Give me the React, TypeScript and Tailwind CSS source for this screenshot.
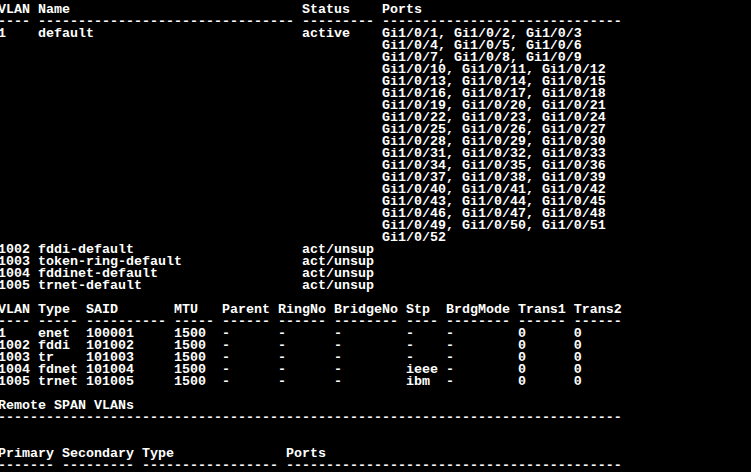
const dash = (n: number) => "-".repeat(n);
const pad = (s: string, n: number) => s.padEnd(n, " ");

const ports: string[] = [];
for (let i = 1; i <= 52; i += 3) {
  const group = [i, i + 1, i + 2].filter((p) => p <= 52).map((p) => `Gi1/0/${p}`);
  ports.push(group.join(", "));
}

const vlanRows = [
  ["1002", "fddi-default"],
  ["1003", "token-ring-default"],
  ["1004", "fddinet-default"],
  ["1005", "trnet-default"],
];

const typeRows = [
  ["1", "enet", "100001", "-"],
  ["1002", "fddi", "101002", "-"],
  ["1003", "tr", "101003", "-"],
  ["1004", "fdnet", "101004", "ieee"],
  ["1005", "trnet", "101005", "ibm"],
];

function buildLines() {
  const lines: string[] = [];
  lines.push(pad("VLAN", 5) + pad("Name", 33) + pad("Status", 10) + "Ports");
  lines.push([dash(4), dash(32), dash(9), dash(30)].join(" "));
  ports.forEach((p, i) => {
    if (i === 0) lines.push(pad("1", 5) + pad("default", 33) + pad("active", 10) + p);
    else lines.push(" ".repeat(48) + p);
  });
  vlanRows.forEach(([id, name]) => lines.push(pad(id, 5) + pad(name, 33) + "act/unsup"));
  lines.push("");
  lines.push("VLAN Type  SAID       MTU   Parent RingNo BridgeNo Stp  BrdgMode Trans1 Trans2");
  lines.push([dash(4), dash(5), dash(10), dash(5), dash(6), dash(6), dash(8), dash(4), dash(8), dash(6), dash(6)].join(" "));
  typeRows.forEach(([id, type, said, stp]) =>
    lines.push(
      pad(id, 5) + pad(type, 6) + pad(said, 11) + pad("1500", 6) + pad("-", 7) + pad("-", 7) + pad("-", 9) + pad(stp, 5) + pad("-", 9) + pad("0", 7) + "0"
    )
  );
  lines.push("");
  lines.push("Remote SPAN VLANs");
  lines.push(dash(78));
  lines.push("");
  lines.push("");
  lines.push("Primary Secondary Type              Ports");
  lines.push([dash(7), dash(9), dash(17), dash(42)].join(" "));
  return lines;
}

export default function App() {
  const lines = buildLines();
  return (
    <div className="w-[751px] h-[472px] bg-black overflow-hidden">
      <pre className="-ml-[2px] pt-[4px] text-white font-bold text-[13.333px] leading-[12px] font-['Liberation_Mono',monospace] whitespace-pre">
        {lines.join("\n")}
      </pre>
    </div>
  );
}
